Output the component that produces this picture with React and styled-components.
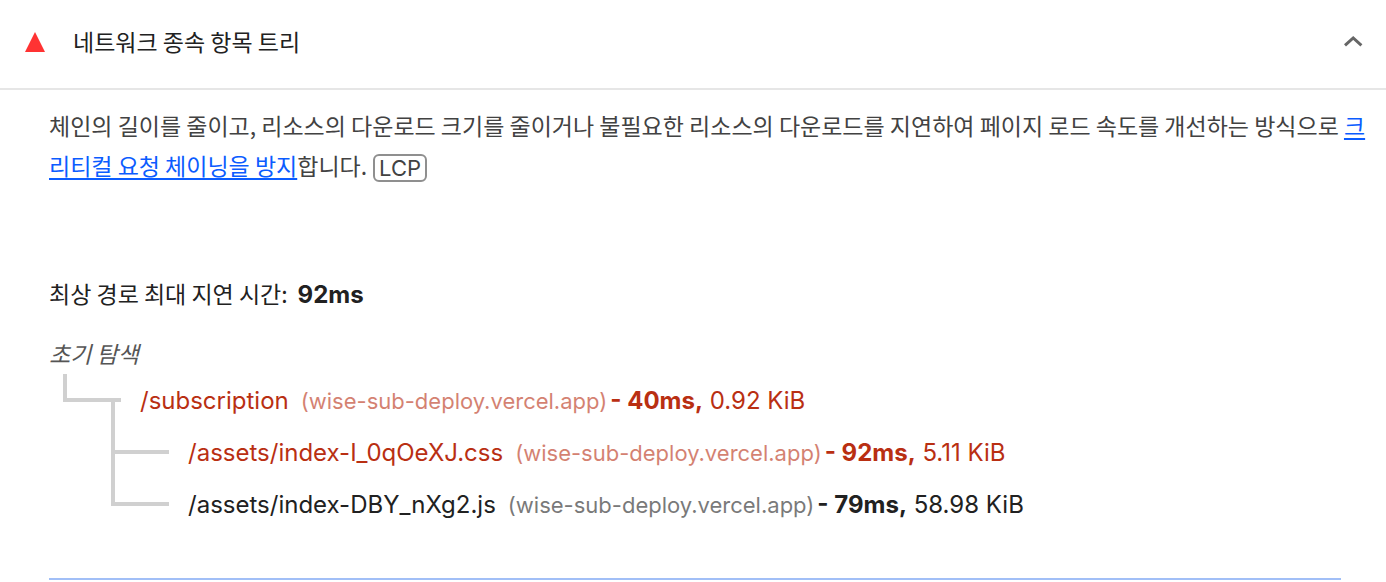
import React, { useState } from "react";
import styled, { createGlobalStyle, css } from "styled-components";

const hangul = `"Noto Sans CJK KR", sans-serif`;
const latin = `Inter, "Noto Sans CJK KR", sans-serif`;
const line = "#d0d0d0";

const GlobalStyle = createGlobalStyle`
  *, *::before, *::after { box-sizing: border-box; }
  body {
    margin: 0;
    background: #fff;
    color: #212121;
    font-family: ${hangul};
    font-size: 23px;
    line-height: 40px;
  }
`;

const Header = styled.h3`
  margin: 0;
  border-bottom: 2px solid #e6e6e6;
  font-size: inherit;
  font-weight: 400;
`;

const Toggle = styled.button`
  display: flex;
  align-items: center;
  width: 100%;
  padding: 22px 23px 26px 25px;
  border: 0;
  background: none;
  color: inherit;
  font: inherit;
  text-align: left;
  cursor: pointer;
`;

const Title = styled.span`
  flex: 1;
  margin-left: 28px;
  padding-bottom: 2px;
  line-height: 38px;
`;

const Description = styled.p`
  margin: 0;
  padding: 15px 16px 0 49px;
  color: #424242;
`;

const Link = styled.a`
  color: #0b5cff;
  text-decoration: underline;
  text-decoration-thickness: 2px;
  text-underline-offset: 3px;
`;

const Metric = styled.span`
  display: inline-block;
  margin-left: 6px;
  padding: 0 4px;
  border: 2px solid #8f8f8f;
  border-radius: 6px;
  font-family: ${latin};
  font-size: 22px;
  line-height: 24px;
  vertical-align: -1px;
`;

const Details = styled.section`
  margin: 88px 45px 0 49px;
  padding-bottom: 48px;
  border-bottom: 2px solid #a1bff7;
`;

const Latency = styled.p`
  display: flex;
  align-items: baseline;
  gap: 10px;
  margin: 0 0 20px;
`;

const Duration = styled.strong`
  font-family: ${latin};
  font-size: 24px;
  font-weight: 700;
  line-height: 24px;
`;

const Root = styled.div`
  padding-bottom: 1px;
  color: #555;
  font-style: italic;
`;

const Branch = styled.ul`
  margin: 0;
  padding: 0 0 0 ${(p) => p.$indent}px;
  list-style: none;
`;

const Row = styled.div`
  display: flex;
  gap: 19px;
  height: 52px;
`;

const Connector = styled.span`
  display: flex;
  flex-direction: column;
  flex: none;
  width: 58px;
`;

const Elbow = styled.span`
  height: 28px;
  border: solid ${line};
  border-width: 0 0 4px 4px;
`;

const Stem = styled.span`
  flex: 1;
  width: 10px;
  border-left: 4px solid ${line};
  ${(p) => p.$toChild && css`align-self: flex-end;`}
`;

const Request = styled.span`
  color: ${(p) => (p.$critical ? "#b92f12" : "#212121")};
  font-family: ${latin};
  font-size: 24px;
  line-height: 54px;
  white-space: nowrap;
`;

const Host = styled.span`
  margin: 0 3px 0 12px;
  font-size: 22px;
  opacity: 0.6;
`;

const chain = {
  url: "/subscription",
  time: "40ms",
  size: "0.92 KiB",
  critical: true,
  children: [
    { url: "/assets/index-I_0qOeXJ.css", time: "92ms", size: "5.11 KiB", critical: true },
    { url: "/assets/index-DBY_nXg2.js", time: "79ms", size: "58.98 KiB", critical: false },
  ],
};

function Node({ item, hasNext }) {
  return (
    <li>
      <Row>
        <Connector aria-hidden="true">
          <Elbow />
          {(hasNext || item.children) && <Stem $toChild={!!item.children} />}
        </Connector>
        <Request $critical={item.critical}>
          {item.url}
          <Host>(wise-sub-deploy.vercel.app)</Host>
          <Duration>- {item.time},</Duration> {item.size}
        </Request>
      </Row>
      {item.children && (
        <Branch $indent={48}>
          {item.children.map((child, i) => (
            <Node key={child.url} item={child} hasNext={i < item.children.length - 1} />
          ))}
        </Branch>
      )}
    </li>
  );
}

export default function App() {
  const [open, setOpen] = useState(true);
  return (
    <main>
      <GlobalStyle />
      <Header>
        <Toggle type="button" aria-expanded={open} onClick={() => setOpen(!open)}>
          <svg width="20" height="20" viewBox="0 0 20 20" aria-hidden="true">
            <path d="M10 0L20 20H0Z" fill="#ff3333" />
          </svg>
          <Title>네트워크 종속 항목 트리</Title>
          <svg width="20" height="20" viewBox="0 0 20 20" aria-hidden="true">
            <path d="M2 13.300L10.200 6L18.400 13.300" fill="none" stroke="#666" strokeWidth="3" />
          </svg>
        </Toggle>
      </Header>
      {open && (
        <>
          <Description>
            체인의 길이를 줄이고, 리소스의 다운로드 크기를 줄이거나 불필요한 리소스의 다운로드를 지연하여 페이지 로드 속도를
            개선하는 방식으로 <Link href="#critical-request-chains">크리티컬 요청 체이닝을 방지</Link>합니다.
            <Metric>LCP</Metric>
          </Description>
          <Details>
            <Latency>
              <span>최상 경로 최대 지연 시간:</span>
              <Duration>92ms</Duration>
            </Latency>
            <Root>초기 탐색</Root>
            <Branch $indent={14}>
              <Node item={chain} />
            </Branch>
          </Details>
        </>
      )}
    </main>
  );
}
